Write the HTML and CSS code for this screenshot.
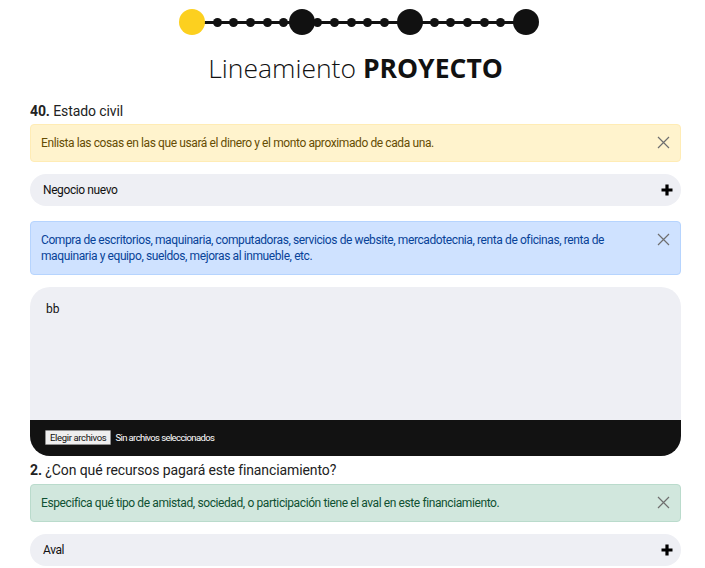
FILE: index.html
```html
<!DOCTYPE html>
<html lang="es">
<head>
<meta charset="utf-8">
<title>Lineamiento PROYECTO</title>
<link rel="stylesheet" href="styles.css">
</head>
<body>
<div class="page">
  <div class="stepper">
    <span class="step step-active"></span>
    <span class="step"></span>
    <span class="step"></span>
    <span class="step"></span>
    <span class="step"></span>
    <span class="step"></span>
    <span class="step step-big step-b1"></span>
    <span class="step step-after-b1"></span>
    <span class="step"></span>
    <span class="step"></span>
    <span class="step"></span>
    <span class="step"></span>
    <span class="step step-big step-b2"></span>
    <span class="step step-after-b2"></span>
    <span class="step"></span>
    <span class="step"></span>
    <span class="step"></span>
    <span class="step"></span>
    <span class="step step-big step-b3"></span>
  </div>

  <h1 class="title"><span class="title-light">Lineamiento</span> <strong class="title-bold">PROYECTO</strong></h1>

  <section class="question">
    <h2 class="q-title"><strong>40.</strong> Estado civil</h2>
    <div class="alert alert-warning">
      <p class="alert-text">Enlista las cosas en las que usará el dinero y el monto aproximado de cada una.</p>
      <span class="alert-close"><svg width="13" height="13" viewBox="0 0 13 13"><path d="M1 1L12 12M12 1L1 12" stroke="#6f6f6f" stroke-width="1.2" fill="none"/></svg></span>
    </div>
    <div class="pill">
      <span class="pill-text">Negocio nuevo</span>
      <svg class="pill-plus" width="12" height="12" viewBox="0 0 12 12"><path d="M6 0.5V11.5M0.5 6H11.5" stroke="#000" stroke-width="3.2" fill="none"/></svg>
    </div>
    <div class="alert alert-info">
      <p class="alert-text">Compra de escritorios, maquinaria, computadoras, servicios de website, mercadotecnia, renta de oficinas, renta de maquinaria y equipo, sueldos, mejoras al inmueble, etc.</p>
      <span class="alert-close"><svg width="13" height="13" viewBox="0 0 13 13"><path d="M1 1L12 12M12 1L1 12" stroke="#6f6f6f" stroke-width="1.2" fill="none"/></svg></span>
    </div>
    <div class="answer">
      <div class="answer-text">bb</div>
      <div class="answer-files">
        <span class="file-btn">Elegir archivos</span>
        <span class="file-label">Sin archivos seleccionados</span>
      </div>
    </div>
  </section>

  <section class="question">
    <h2 class="q-title q-title-next"><strong>2.</strong> ¿Con qué recursos pagará este financiamiento?</h2>
    <div class="alert alert-success">
      <p class="alert-text">Especifica qué tipo de amistad, sociedad, o participación tiene el aval en este financiamiento.</p>
      <span class="alert-close"><svg width="13" height="13" viewBox="0 0 13 13"><path d="M1 1L12 12M12 1L1 12" stroke="#6f6f6f" stroke-width="1.2" fill="none"/></svg></span>
    </div>
    <div class="pill">
      <span class="pill-text">Aval</span>
      <svg class="pill-plus" width="12" height="12" viewBox="0 0 12 12"><path d="M6 0.5V11.5M0.5 6H11.5" stroke="#000" stroke-width="3.2" fill="none"/></svg>
    </div>
  </section>
</div>
</body>
</html>
```
FILE: styles.css
```css
html, body {
  margin: 0;
  padding: 0;
  background: #ffffff;
}
body {
  font-family: Roboto, "Liberation Sans", sans-serif;
  color: #111111;
  overflow: hidden;
}
.page {
  margin-left: 30px;
  width: 651px;
}

/* stepper */
.stepper {
  position: relative;
  display: flex;
  align-items: center;
  width: 359px;
  height: 26px;
  margin: 9px 0 0 149px;
}
.stepper::before {
  content: "";
  position: absolute;
  left: 13px;
  right: 13px;
  top: 11.5px;
  height: 3px;
  background: #111111;
}
.step {
  position: relative;
  flex: none;
  width: 9px;
  height: 9px;
  border-radius: 50%;
  background: #111111;
  margin-left: 7.67px;
}
.step-active {
  width: 26px;
  height: 26px;
  margin-left: 0;
  background: #fcd01f;
}
.step-big {
  width: 26px;
  height: 26px;
}
.step-b1 { margin-left: 0.5px; }
.step-after-b1 { margin-left: -1.5px; }
.step-b2 { margin-left: 7.8px; }
.step-after-b2 { margin-left: 7px; }
.step-b3 { margin-left: 7.3px; }

/* title */
.title {
  margin: 16.7px 0 17.2px;
  text-align: center;
  font-family: "Open Sans", sans-serif;
  font-size: 26.5px;
  line-height: 32px;
  font-weight: 300;
  color: #111111;
}
.title-bold {
  font-weight: 700;
}

/* questions */
.q-title {
  margin: 0 0 3px;
  font-size: 14px;
  line-height: 20px;
  font-weight: 400;
  color: #222222;
  letter-spacing: -0.1px;
}
.q-title strong {
  font-weight: 700;
}
.q-title-next {
  margin-top: 4px;
  margin-bottom: 4px;
}

.alert {
  display: flex;
  align-items: flex-start;
  padding: 10px;
  border: 1px solid transparent;
  border-radius: 4px;
  margin-bottom: 12px;
}
.alert-text {
  flex: 1;
  margin: 0;
  padding-right: 20px;
  font-size: 12px;
  line-height: 16px;
  letter-spacing: -0.4px;
}
.alert-close {
  flex: none;
  display: flex;
  width: 13px;
  height: 13px;
  margin-top: 1.5px;
}
.alert-warning {
  background: #fff3cd;
  border-color: #ffecb5;
  color: #664d03;
}
.alert-info {
  background: #cfe2ff;
  border-color: #b6d4fe;
  color: #084298;
}
.alert-success {
  background: #d1e7dd;
  border-color: #badbcc;
  color: #0f5132;
}

.pill {
  display: flex;
  align-items: center;
  justify-content: space-between;
  height: 32px;
  padding: 0 8.5px 0 13px;
  border-radius: 16px;
  background: #eeeff4;
  margin-bottom: 15px;
}
.pill-text {
  font-size: 12px;
  letter-spacing: -0.4px;
  color: #111111;
  padding-top: 1px;
}
.pill-plus {
  display: block;
}

.answer {
  display: flex;
  flex-direction: column;
  height: 169px;
  border-radius: 20px;
  overflow: hidden;
  background: #eeeff4;
}
.answer-text {
  flex: 1;
  padding: 15px 16px 13px;
  font-size: 12px;
  color: #111111;
}
.answer-files {
  display: flex;
  align-items: center;
  height: 36px;
  padding: 0 0 0 15px;
  background: #121212;
}
.file-btn {
  display: block;
  padding: 0 4px;
  height: 13px;
  line-height: 13px;
  font-size: 9.5px;
  letter-spacing: -0.35px;
  color: #111111;
  background: #efefef;
  border: 1px solid #8f8f8f;
  border-radius: 1px;
}
.file-label {
  margin-left: 4px;
  font-size: 9.5px;
  letter-spacing: -0.6px;
  color: #ffffff;
}
```
